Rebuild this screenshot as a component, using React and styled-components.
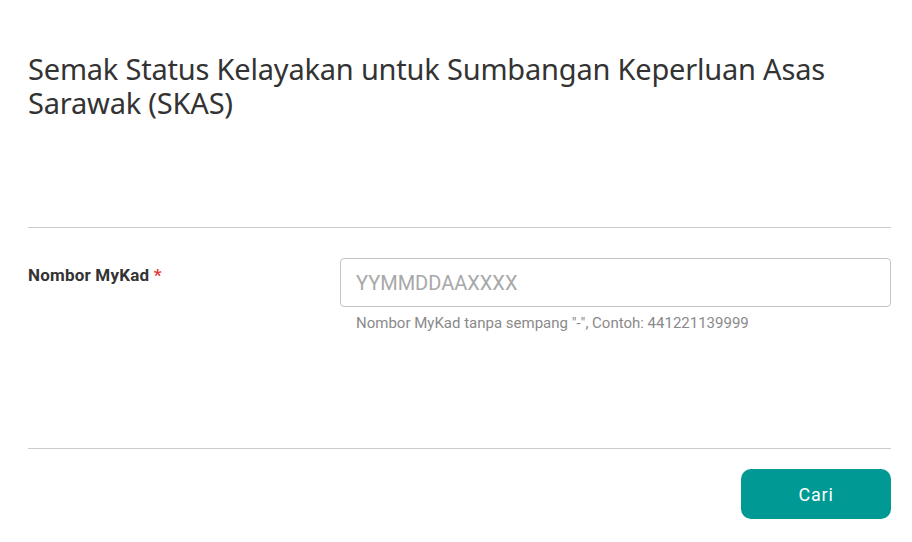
import styled, { createGlobalStyle } from "styled-components"

const Global = createGlobalStyle`
    body {
        margin: 0;
        background: #ffffff;
        font-family: Roboto, "Liberation Sans", sans-serif;
    }
`

const Page = styled.main`
    padding: 52px 21px 0 28px;
`

const Title = styled.h1`
    margin: 0;
    font-family: "Noto Sans", "Open Sans", sans-serif;
    font-weight: 400;
    font-size: 29px;
    line-height: 34px;
    color: #333333;
    letter-spacing: -0.2px;
`

const Divider = styled.hr`
    margin: ${props => props.$top}px 0 0;
    border: 0;
    border-top: 1px solid #cccccc;
`

const FormRow = styled.div`
    display: grid;
    grid-template-columns: 312px 1fr;
    padding-top: 30px;
    height: 190px;
`

const Label = styled.label`
    font-size: 17px;
    font-weight: 700;
    color: #333333;
    padding-top: 7px;
    letter-spacing: 0.2px;
`

const Required = styled.span`
    color: #e53935;
`

const Field = styled.div`
    display: flex;
    flex-direction: column;
`

const Input = styled.input`
    box-sizing: border-box;
    height: 49px;
    width: 100%;
    border: 1px solid #c4c4c4;
    border-radius: 4px;
    padding: 0 15px;
    font-family: Roboto, sans-serif;
    font-size: 20px;
    color: #333333;
    &::placeholder {
        color: #a8a8a8;
    }
`

const Hint = styled.div`
    margin-top: 7px;
    padding-left: 16px;
    font-size: 15px;
    color: #8a8a8a;
`

const Actions = styled.div`
    display: flex;
    justify-content: flex-end;
    padding-top: 20px;
`

const Button = styled.button`
    width: 150px;
    height: 50px;
    border: 0;
    border-radius: 10px;
    background: #009994;
    color: #ffffff;
    font-family: Roboto, sans-serif;
    font-size: 18px;
    font-weight: 400;
    letter-spacing: 0.8px;
`

const App = () => {
    return <>
        <Global />
        <Page>
            <Title>Semak Status Kelayakan untuk Sumbangan Keperluan Asas Sarawak (SKAS)</Title>
            <Divider $top={107} />
            <FormRow>
                <Label>Nombor MyKad <Required>*</Required></Label>
                <Field>
                    <Input placeholder="YYMMDDAAXXXX" />
                    <Hint>Nombor MyKad tanpa sempang "-", Contoh: 441221139999</Hint>
                </Field>
            </FormRow>
            <Divider $top={0} />
            <Actions>
                <Button>Cari</Button>
            </Actions>
        </Page>
    </>
}

export default App
